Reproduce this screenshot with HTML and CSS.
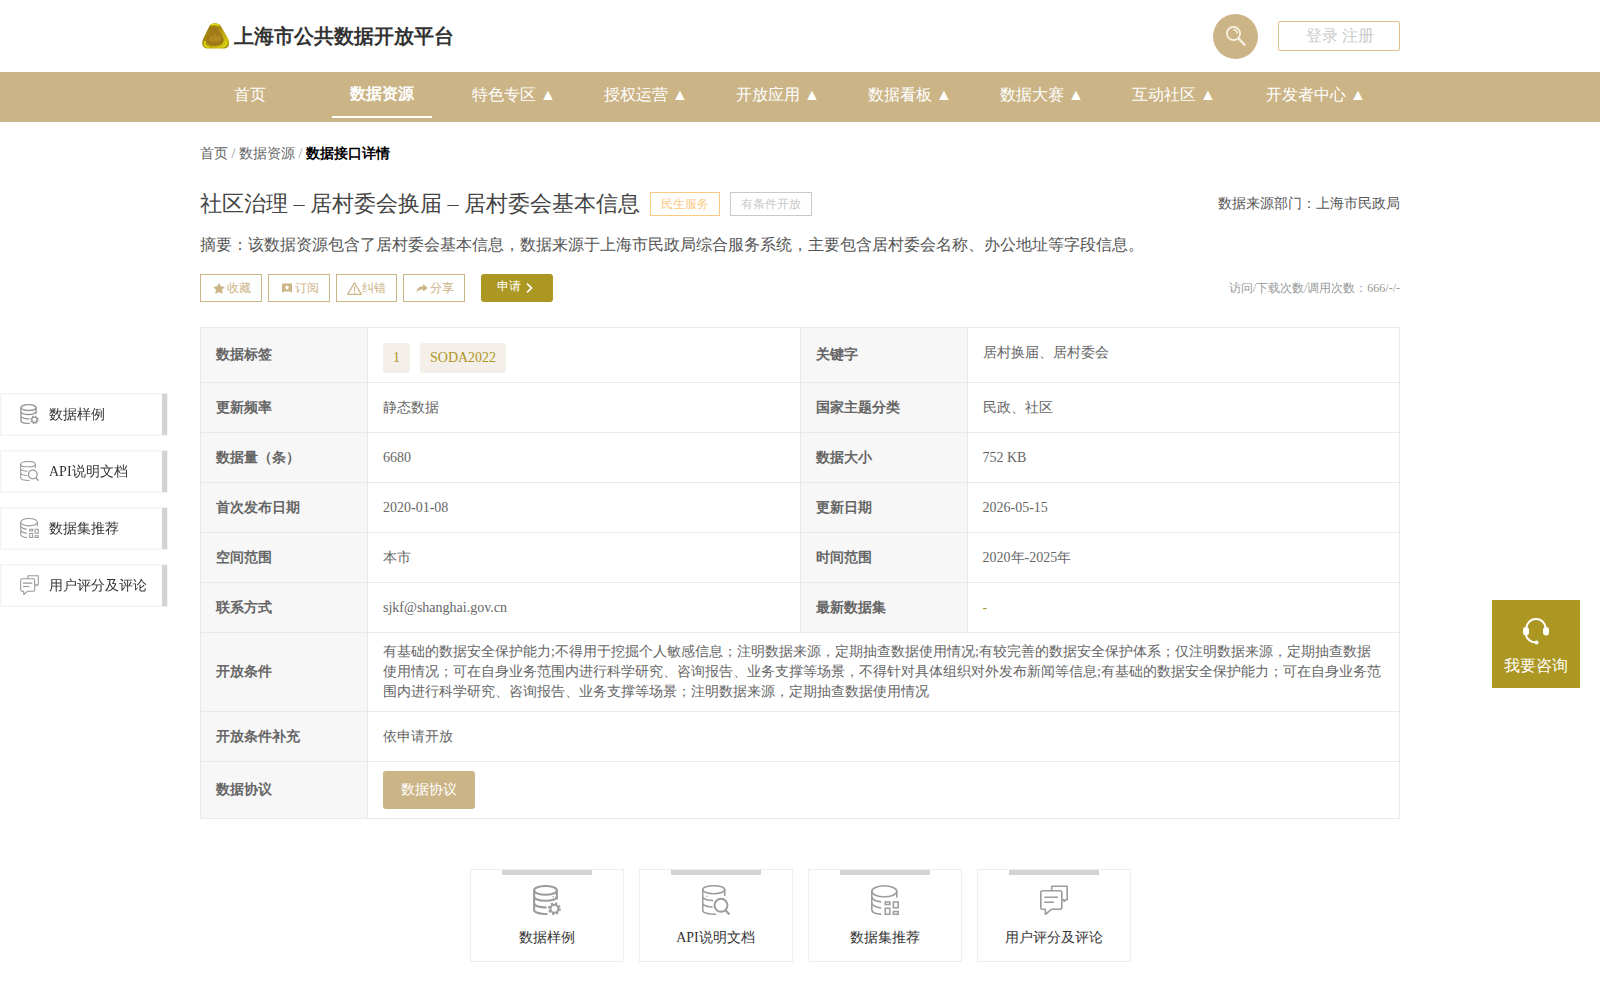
FILE: index.html
```html
<!DOCTYPE html>
<html lang="zh">
<head>
    <meta charset="UTF-8">
    <meta name="viewport" content="width=device-width, initial-scale=1.0">
    <title>上海市公共数据开放平台</title>
    <link rel="stylesheet" href="styles.css">
</head>
<body>
    <!-- 图标 -->
    <svg class="icon-defs" aria-hidden="true">
        <symbol id="icon-sample" viewBox="0 0 28 30">
            <g fill="none" stroke="currentColor" stroke-width="2.1">
                <ellipse cx="12.5" cy="5.4" rx="11.4" ry="4.4"/>
                <path d="M1.1 5.4V25c0 2.2 5 4 13.5 4.2M23.9 5.4V14.5M1.1 11.5c1 5.7 21.8 5.7 22.8 0M1.1 18.5c1 2.4 6 3.9 12.5 4"/>
                <circle cx="21.4" cy="23.7" r="4"/>
            </g>
            <circle cx="21.4" cy="23.7" r="5.5" fill="none" stroke="currentColor" stroke-width="1.9" stroke-dasharray="2.16 2.16"/>
            <circle cx="20.3" cy="11.7" r="0.8" fill="currentColor"/>
        </symbol>
        <symbol id="icon-api" viewBox="0 0 28 30">
            <g fill="none" stroke="currentColor" stroke-width="1.6">
                <ellipse cx="11.7" cy="4.7" rx="11" ry="4"/>
                <path d="M0.7 4.7V25.5c0 2.2 5 3.6 13.5 3.7M22.7 4.7V11M0.7 12c1 2 4.5 3.2 10.5 3.5M0.7 18.5c1 2 4.5 3.2 10 3.5"/>
                <circle cx="19" cy="20.3" r="6.5" stroke-width="2"/>
                <path d="M23.5 25.2l4 4.3" stroke-width="2.2"/>
            </g>
            <circle cx="5" cy="11.3" r="0.7" fill="currentColor"/>
        </symbol>
        <symbol id="icon-dataset" viewBox="0 0 28 30">
            <g fill="none" stroke="currentColor" stroke-width="1.6">
                <ellipse cx="13.3" cy="6.3" rx="12.5" ry="5.5"/>
                <path d="M0.8 6.3V24.5c0 2.7 4 4.5 9.5 4.8M25.8 6.3V12.5M0.8 12c1 3 4.5 4.500 9.4 4.900M0.8 18c1 3 4.5 4.500 9.400 4.900"/>
                <path d="M14.3 17h4.500v2.500h-4.500zM22.400 17h4.800v5.800h-4.800zM14.300 23.300h4.500v5.900h-4.500zM22.400 26.500h4.800v2.700h-4.800z"/>
            </g>
        </symbol>
        <symbol id="icon-comment" viewBox="0 0 28 30">
            <path fill="none" stroke="currentColor" stroke-width="1.6" stroke-linejoin="round" d="M2.8 5.7h17c1.300 0 2 .7 2 2v14.600c0 1.300-.7 2-2 2h-8.400l-6 5v-5H2.800c-1.300 0-2-.7-2-2V7.700c0-1.300.7-2 2-2zM11.700 5.500V1.200h15.500V14.200l-3.300 2v-1.500h-2M4.300 12.200h13.700M4.300 17.300h9.700"/>
        </symbol>
    </svg>

    <header class="header">
        <div class="container header-inner">
            <div class="logo">
                <svg class="logo-img" viewBox="0 0 27 26">
                    <defs>
                        <linearGradient id="logoGold" x1="0" y1="0" x2="1" y2="1">
                            <stop offset="0" stop-color="#8a7412"/>
                            <stop offset="0.4" stop-color="#a98a0b"/>
                            <stop offset="0.8" stop-color="#cfc40e"/>
                            <stop offset="1" stop-color="#8a6a20"/>
                        </linearGradient>
                    </defs>
                    <path fill="url(#logoGold)" d="M13 .3c3 0 5 1 6.500 4l6.600 11.200c2.300 5 1 9-3.300 10H4.300C.3 24.500-.9 20.500 1.100 16L6.700 4.500C8 1.600 10 .3 13 .3z"/>
                    <path fill="none" stroke="#e0dc10" stroke-width="1.6" d="M9 2.500C11 .9 15 .9 17 2.800M3 18c-1.500 4 .5 6 4 6M20 23.500c3 .5 4.500-1.500 4.500-4.500"/>
                    <path fill="#a07a18" d="M9 7c2-4 6-4 8 0l4.500 8.500c1 4-2 7.500-8.500 7.500s-9.500-3.500-8.500-7.500z"/>
                    <path fill="none" stroke="#c9a030" stroke-width="0.8" d="M8 18v-3c0-2 2-2 2 0v4M12 19v-6c0-1.500 2-1.500 2 0v6M16 19v-4c0-2 2-2 2 0v3"/>
                </svg>
                <span class="logo-text">上海市公共数据开放平台</span>
            </div>
            <div class="header-right">
                <a class="search-btn">
                    <svg width="20" height="20" viewBox="0 0 20 20" fill="none" stroke="#f8f1e4">
                        <circle cx="7.5" cy="7.5" r="6.6" stroke-width="1.8"/>
                        <path d="M7.5 3.7c2.300.1 3.700 1.500 3.900 3.900" stroke-width="1.6"/>
                        <path d="M12.5 12.5l6.700 6.800" stroke-width="2.3"/>
                    </svg>
                </a>
                <div class="login-box"><a>登录</a> <a>注册</a></div>
            </div>
        </div>
    </header>

    <nav class="nav">
        <div class="container nav-list">
            <a class="nav-item">首页</a>
            <a class="nav-item active">数据资源</a>
            <a class="nav-item">特色专区 ▲</a>
            <a class="nav-item">授权运营 ▲</a>
            <a class="nav-item">开放应用 ▲</a>
            <a class="nav-item">数据看板 ▲</a>
            <a class="nav-item">数据大赛 ▲</a>
            <a class="nav-item">互动社区 ▲</a>
            <a class="nav-item nav-wide">开发者中心 ▲</a>
        </div>
    </nav>

    <main class="container">
        <div class="breadcrumb">首页 <i>/</i> 数据资源 <i>/</i> <b>数据接口详情</b></div>

        <div class="title-row">
            <h1 class="title">社区治理 – 居村委会换届 – 居村委会基本信息</h1>
            <span class="badge badge-orange">民生服务</span>
            <span class="badge badge-gray">有条件开放</span>
            <span class="source">数据来源部门：上海市民政局</span>
        </div>

        <p class="summary">摘要：该数据资源包含了居村委会基本信息，数据来源于上海市民政局综合服务系统，主要包含居村委会名称、办公地址等字段信息。</p>

        <div class="action-row">
            <a class="action">
                <svg width="12" height="11" viewBox="0 0 12 11"><path fill="currentColor" stroke="currentColor" stroke-linejoin="round" d="M6 .8l1.500 3 3.700.5-2.700 2.300.7 3.600L6 8.500l-3.200 1.700.7-3.600L.8 4.300l3.700-.5z"/></svg>收藏
            </a>
            <a class="action">
                <svg class="ic-sub" width="10" height="10" viewBox="0 0 10 10"><path fill="currentColor" fill-rule="evenodd" d="M0 .5h10v9L7.500 8.500h-5L0 9.500zM5 2l-.8 1.600-1.700.2 1.300 1.200-.3 1.700L5 5.900l1.500.8-.3-1.700 1.300-1.200-1.700-.2z"/></svg>订阅
            </a>
            <a class="action action-warn">
                <svg width="15" height="13" viewBox="0 0 15 13"><path fill="none" stroke="currentColor" stroke-width="1.200" stroke-linejoin="round" d="M7.500.7l6.800 11.700H.7zM7.500 4.200v5M7.500 10.200v1.200"/></svg>纠错
            </a>
            <a class="action">
                <svg width="12" height="9" viewBox="0 0 12 9"><path fill="currentColor" d="M7.200 0l4.500 3.900-4.500 3.700V5.500C4 5.300 2 6.300.4 8.800.7 4.800 3 2.300 7.200 2.200z"/></svg>分享
            </a>
            <a class="apply">申请
                <svg width="7" height="10" viewBox="0 0 7 10"><path fill="none" stroke="#fff" stroke-width="1.700" d="M1 .7l4.500 4.300L1 9.300"/></svg>
            </a>
            <span class="counts">访问/下载次数/调用次数：666/-/-</span>
        </div>

        <table class="info">
            <tr class="row-tags">
                <th>数据标签</th>
                <td><div class="tags"><span class="tag">1</span><span class="tag">SODA2022</span></div></td>
                <th>关键字</th>
                <td class="keywords">居村换届、居村委会</td>
            </tr>
            <tr>
                <th>更新频率</th>
                <td>静态数据</td>
                <th>国家主题分类</th>
                <td>民政、社区</td>
            </tr>
            <tr>
                <th>数据量（条）</th>
                <td>6680</td>
                <th>数据大小</th>
                <td>752 KB</td>
            </tr>
            <tr>
                <th>首次发布日期</th>
                <td>2020-01-08</td>
                <th>更新日期</th>
                <td>2026-05-15</td>
            </tr>
            <tr>
                <th>空间范围</th>
                <td>本市</td>
                <th>时间范围</th>
                <td>2020年-2025年</td>
            </tr>
            <tr>
                <th>联系方式</th>
                <td>sjkf@shanghai.gov.cn</td>
                <th>最新数据集</th>
                <td><a class="link">-</a></td>
            </tr>
            <tr class="row-terms">
                <th>开放条件</th>
                <td colspan="3">有基础的数据安全保护能力;不得用于挖掘个人敏感信息；注明数据来源，定期抽查数据使用情况;有较完善的数据安全保护体系；仅注明数据来源，定期抽查数据使用情况；可在自身业务范围内进行科学研究、咨询报告、业务支撑等场景，不得针对具体组织对外发布新闻等信息;有基础的数据安全保护能力；可在自身业务范围内进行科学研究、咨询报告、业务支撑等场景；注明数据来源，定期抽查数据使用情况</td>
            </tr>
            <tr>
                <th>开放条件补充</th>
                <td colspan="3">依申请开放</td>
            </tr>
            <tr class="row-protocol">
                <th>数据协议</th>
                <td colspan="3"><a class="protocol">数据协议</a></td>
            </tr>
        </table>

        <div class="cards">
            <a class="card"><svg class="card-icon"><use href="#icon-sample"/></svg>数据样例</a>
            <a class="card"><svg class="card-icon"><use href="#icon-api"/></svg>API说明文档</a>
            <a class="card"><svg class="card-icon"><use href="#icon-dataset"/></svg>数据集推荐</a>
            <a class="card"><svg class="card-icon"><use href="#icon-comment"/></svg>用户评分及评论</a>
        </div>
    </main>

    <!-- 左侧快捷导航 -->
    <aside class="side">
        <a class="side-item"><svg class="side-icon"><use href="#icon-sample"/></svg>数据样例</a>
        <a class="side-item"><svg class="side-icon"><use href="#icon-api"/></svg>API说明文档</a>
        <a class="side-item"><svg class="side-icon"><use href="#icon-dataset"/></svg>数据集推荐</a>
        <a class="side-item"><svg class="side-icon"><use href="#icon-comment"/></svg>用户评分及评论</a>
    </aside>

    <a class="consult">
        <svg width="26" height="27" viewBox="0 0 26 27">
            <path fill="none" stroke="#fff" stroke-width="2" d="M3 11C3.500 5 7.500 1.100 13 1.100S22.500 5 23 11M2.500 16c1.300 5 5 8.200 10.500 8.600"/>
            <rect x="0" y="9" width="6" height="8.5" rx="3" fill="#fff"/>
            <rect x="20" y="9" width="6" height="8.5" rx="3" fill="#fff"/>
            <circle cx="13.5" cy="24.5" r="2" fill="#fff"/>
        </svg>
        <span>我要咨询</span>
    </a>
</body>
</html>
```
FILE: styles.css
```css
* {
    box-sizing: border-box;
}

body {
    margin: 0;
    font-family: "Liberation Serif", serif;
    font-size: 14px;
    color: #333;
    background: #fff;
}

.container {
    width: 1200px;
    margin: 0 auto;
}

.icon-defs {
    position: absolute;
    width: 0;
    height: 0;
}

svg {
    display: block;
    flex: none;
}

/* 头部 */
.header-inner {
    display: flex;
    justify-content: space-between;
    align-items: center;
    height: 72px;
}

.logo {
    display: flex;
    align-items: center;
    padding-left: 2px;
    gap: 5px;
}

.logo-img {
    width: 27px;
    height: 26px;
}

.logo-text {
    font-size: 20px;
    font-weight: bold;
}

.header-right {
    display: flex;
    align-items: center;
    gap: 20px;
}

.search-btn {
    display: flex;
    align-items: center;
    justify-content: center;
    width: 45px;
    height: 45px;
    border-radius: 50%;
    background: #cbb486;
}

.login-box {
    width: 122px;
    height: 30px;
    padding-left: 1px;
    line-height: 28px;
    border: 1px solid #ddc08a;
    border-radius: 2px;
    text-align: center;
    font-size: 16px;
    color: #ccc;
}

/* 导航 */
.nav {
    height: 50px;
    background: #cbb486;
}

.nav-list {
    display: flex;
    gap: 32px;
}

.nav-item {
    width: 100px;
    height: 46px;
    line-height: 46px;
    text-align: center;
    white-space: nowrap;
    font-size: 16px;
    color: #fff;
}

.nav-item.nav-wide {
    width: 120px;
}

.nav-item.active {
    line-height: 44px;
    font-weight: bold;
    border-bottom: 2px solid #fff;
}

.breadcrumb {
    height: 62px;
    line-height: 64px;
    color: #666;
}

.breadcrumb i {
    font-style: normal;
    color: #999;
}

.breadcrumb b {
    color: #000;
}

/* 标题 */
.title-row {
    display: flex;
    align-items: center;
    gap: 10px;
    height: 40px;
}

.title {
    margin: 0;
    font-size: 22px;
    font-weight: normal;
    color: #444;
}

.badge {
    height: 24px;
    padding: 0 10px;
    line-height: 22px;
    font-size: 12px;
    border: 1px solid;
}

.badge-orange {
    color: #fbca82;
}

.badge-gray {
    color: #c9c9c9;
}

.source {
    margin-left: auto;
    color: #555;
}

.summary {
    margin: 0;
    height: 50px;
    line-height: 42px;
    font-size: 16px;
    color: #555;
}

.action-row {
    display: flex;
    gap: 6px;
    height: 28px;
}

.action {
    display: flex;
    align-items: center;
    gap: 2px;
    width: 62px;
    padding-left: 12px;
    border: 1px solid #cbb486;
    font-size: 12px;
    color: #cbb486;
}

.action-warn {
    width: 61px;
    padding-left: 10px;
    gap: 0;
}

.ic-sub {
    margin: 0 1px;
}

.apply {
    display: flex;
    gap: 5px;
    width: 72px;
    margin-left: 10px;
    padding-left: 16px;
    line-height: 24px;
    border-radius: 3px;
    font-size: 12px;
    color: #fff;
    background: #ad9723;
}

.apply svg {
    margin-top: 9px;
}

.counts {
    margin-left: auto;
    line-height: 28px;
    font-size: 12px;
    color: #999;
}

/* 详情表格 */
.info {
    width: 1200px;
    margin-top: 25px;
    border-collapse: collapse;
    table-layout: fixed;
    line-height: 20px;
    color: #666;
}

.info th,
.info td {
    height: 50px;
    padding: 0 15px;
    border: 1px solid #e9e9e9;
    text-align: left;
}

.info th {
    width: 167px;
    background: #f7f7f7;
}

.info .row-tags td,
.info .row-tags th {
    height: 55px;
}

.info .row-terms td {
    height: 79px;
}

.info .row-protocol td {
    height: 57px;
}

.info .keywords {
    padding-bottom: 5px;
}

.tags {
    display: flex;
    gap: 10px;
    padding-top: 6px;
}

.tag {
    padding: 0 10px;
    height: 30px;
    line-height: 30px;
    border-radius: 3px;
    color: #ad9723;
    background: #f4efe8;
}

.link {
    color: #ad9723;
}

.protocol {
    display: block;
    width: 92px;
    height: 38px;
    line-height: 38px;
    text-align: center;
    border-radius: 3px;
    color: #fff;
    background: #cbb486;
}

/* 底部卡片 */
.cards {
    display: flex;
    justify-content: center;
    gap: 15px;
    margin-top: 50px;
}

.card {
    display: flex;
    flex-direction: column;
    align-items: center;
    width: 154px;
    height: 93px;
    border: 1px solid #eee;
}

.card::before {
    content: "";
    width: 90px;
    height: 5px;
    background: #d3d3d3;
}

.card-icon {
    width: 28px;
    height: 30px;
    margin: 10px 0 14px;
    color: #9c9c9c;
}

/* 左侧导航 */
.side {
    position: fixed;
    left: 0;
    top: 393px;
    display: flex;
    flex-direction: column;
    gap: 14px;
}

.side-item {
    display: flex;
    align-items: center;
    width: 168px;
    height: 43px;
    padding-left: 19px;
    border: 1px solid #f3f3f3;
    box-shadow: inset -5px 0 #d3d3d3, inset 0 0 0 1px #fafafa;
}

.side-icon {
    width: 19px;
    height: 20px;
    margin: 0 10px 1px 0;
    color: #999;
}

.consult {
    position: fixed;
    right: 20px;
    top: 600px;
    display: flex;
    flex-direction: column;
    align-items: center;
    gap: 11px;
    width: 88px;
    height: 88px;
    padding-top: 18px;
    font-size: 16px;
    color: #fff;
    background: #ad9723;
}
```
